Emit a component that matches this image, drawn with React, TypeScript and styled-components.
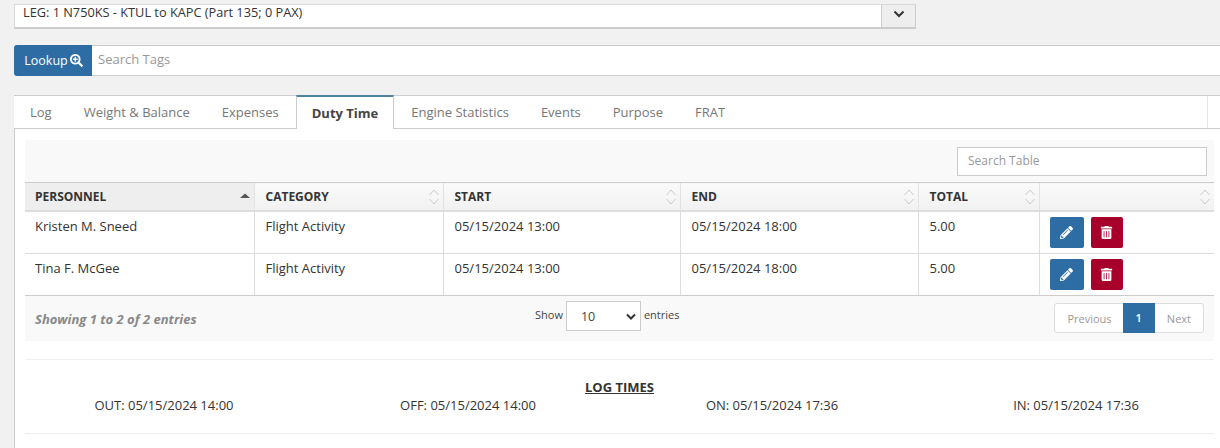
import React from "react";
import styled, { createGlobalStyle } from "styled-components";
import { FaPencilAlt, FaTrashAlt, FaSearchPlus } from "react-icons/fa";

const Global = createGlobalStyle`
  html, body { margin: 0; padding: 0; height: 448px; overflow: hidden; background: #f1f1f1; }
  * { box-sizing: border-box; }
  body { font-family: "Open Sans", sans-serif; font-size: 13px; color: #333; }
`;

const Page = styled.div`
  width: 1220px;
  height: 448px;
  padding: 4px 0 0 14px;
  overflow: hidden;
`;

const LegSelect = styled.div`
  width: 902px;
  height: 25px;
  display: flex;
  background: #fff;
  border: 1px solid #d8d8d8;
  border-bottom: 2px solid #ccc;
  border-right-color: #ccc;
`;

const LegText = styled.div`
  flex: 1;
  padding: 0 8px;
  font-size: 12.75px;
  line-height: 15px;
  color: #333;
`;

const Caret = styled.div`
  width: 34px;
  background: #eee;
  border-left: 1px solid #ccc;
  display: flex;
  justify-content: center;
  padding-top: 5px;
`;

const LookupRow = styled.div`
  display: flex;
  height: 31px;
  margin-top: 16px;
`;

const LookupButton = styled.button`
  width: 78px;
  border: none;
  border-radius: 3px 0 0 3px;
  background: #2e6da4;
  color: #fff;
  font: 12.5px "Open Sans", sans-serif;
  display: flex;
  align-items: center;
  justify-content: center;
  gap: 2px;
  padding: 0 0 0 1px;
`;

const TagInput = styled.div`
  flex: 1;
  background: #fff;
  border-top: 1px solid #ccc;
  border-bottom: 1px solid #ccc;
  padding-left: 6px;
  font-size: 13px;
  line-height: 27px;
  color: #999;
`;

const Panel = styled.div`
  margin-top: 19px;
  background: #fff;
  height: 360px;
  border-left: 1px solid #ccc;
`;

const Tabs = styled.div`
  display: flex;
  height: 34px;
  border-top: 1px solid #ccc;
  border-bottom: 1px solid #ccc;
`;

const Tab = styled.div<{ $active?: boolean }>`
  height: ${(p) => (p.$active ? "34px" : "32px")};
  padding: 0 ${(p) => (p.$active ? "15px" : "16px")};
  margin-top: ${(p) => (p.$active ? "-1px" : "0")};
  margin-left: ${(p) => (p.$active ? "1px" : "0")};
  margin-right: ${(p) => (p.$active ? "1px" : "0")};
  line-height: 33px;
  font-size: 13px;
  font-weight: ${(p) => (p.$active ? 700 : 400)};
  color: ${(p) => (p.$active ? "#444" : "#777")};
  background: #fff;
  &:first-child { margin-left: -1px; }
  ${(p) =>
    p.$active &&
    `border-top: 2px solid #4f849c; border-left: 1px solid #ccc; border-right: 1px solid #ccc; position: relative; z-index: 1;`}
`;

const TabFill = styled.div`
  margin-left: auto;
  width: 13px;
  border-left: 1px solid #e4e4e4;
`;

const Body = styled.div`
  padding: 11px 0 0 10px;
  width: 1199px;
`;

const TableTop = styled.div`
  height: 42px;
  background: #f9f9f9;
  display: flex;
  justify-content: flex-end;
  align-items: flex-start;
  padding: 7px 7px 0 0;
`;

const SearchTable = styled.div`
  width: 250px;
  height: 29px;
  background: #fff;
  border: 1px solid #ccc;
  padding-left: 10px;
  font-size: 12px;
  line-height: 26px;
  color: #999;
`;

const Table = styled.table`
  width: 1189px;
  border-collapse: collapse;
  table-layout: fixed;

  tbody tr:first-child td {
    height: 43px;
  }
`;

const Th = styled.th<{ $w: number; $sorted?: boolean }>`
  width: ${(p) => p.$w}px;
  height: 28px;
  padding: 0 11px;
  text-align: left;
  font-size: 12px;
  font-weight: 700;
  color: #333;
  background: ${(p) => (p.$sorted ? "#eee" : "linear-gradient(#fafafa, #f1f1f1)")};
  border-top: 1px solid #ccc;
  border-bottom: 2px solid #ddd;
  border-left: 1px solid #e2e2e2;
  position: relative;
  &:first-child { border-left: none; padding-left: 10px; }
`;

const SortMark = styled.svg`
  position: absolute;
  right: 3px;
  top: 5px;
`;

const Td = styled.td`
  height: 42px;
  padding: 6px 11px 0;
  vertical-align: top;
  font-size: 13px;
  line-height: 17px;
  color: #333;
  border-bottom: 1px solid #ddd;
  border-left: 1px solid #ddd;
  &:first-child { border-left: none; padding-left: 10px; }
`;

const LastRow = styled.tr`
  td { border-bottom: 1px solid #ccc; }
`;

const Actions = styled.div`
  display: flex;
  gap: 8px;
  margin-top: -1px;
`;

const IconButton = styled.button<{ $danger?: boolean }>`
  width: ${(p) => (p.$danger ? "32px" : "34px")};
  height: 31px;
  margin-left: -1px;
  border: none;
  border-radius: 2px;
  padding: 0;
  color: #fff;
  background: ${(p) => (p.$danger ? "#a6002b" : "#2e6da4")};
  display: flex;
  align-items: center;
  justify-content: center;
  font-size: 13px;
`;

const Footer = styled.div`
  height: 45px;
  background: #f9f9f9;
  display: grid;
  grid-template-columns: 500px auto 1fr;
  padding: 0 10px;
`;

const Info = styled.div`
  font-size: 13px;
  font-weight: 700;
  font-style: italic;
  color: #888;
  line-height: 47px;
`;

const Length = styled.div`
  display: flex;
  align-items: flex-start;
  padding-top: 5px;
  font-size: 11px;
  line-height: 27px;
  gap: 3px;
  color: #444;
`;

const LengthSelect = styled.div`
  width: 75px;
  height: 30px;
  background: #fff;
  border: 1px solid #ccc;
  padding: 0 4px 0 14px;
  font-size: 12.5px;
  line-height: 31px;
  display: flex;
  justify-content: space-between;
  align-items: center;
`;

const Pager = styled.div`
  justify-self: end;
  display: flex;
  height: 30px;
  margin-top: 7px;
  border: 1px solid #ddd;
  border-radius: 3px;
  background: #fff;
  font-size: 11px;
  line-height: 28px;
  color: #999;
`;

const PageButton = styled.div<{ $active?: boolean }>`
  padding: 0 ${(p) => (p.$active ? "13px" : "12px")};
  background: ${(p) => (p.$active ? "#2e6da4" : "transparent")};
  color: ${(p) => (p.$active ? "#fff" : "#999")};
  margin: ${(p) => (p.$active ? "-1px 0" : "0")};
  line-height: 30px;
  font-weight: ${(p) => (p.$active ? 600 : 400)};
  &:first-child { padding-left: 12px; padding-right: 11px; }
`;

const LogTimes = styled.section`
  margin-top: 18px;
  height: 75px;
  border-top: 1px solid #eee;
  border-bottom: 1px solid #eee;
  padding-top: 19px;
`;

const LogTitle = styled.div`
  text-align: center;
  font-size: 13px;
  font-weight: 700;
  text-decoration: underline;
  line-height: 17px;
`;

const LogGrid = styled.div`
  display: grid;
  grid-template-columns: repeat(4, 304px);
  margin: 1px 0 0 -13px;
  font-size: 13px;
  line-height: 17px;
  text-align: center;
  color: #333;
`;

const columns = [
  { label: "PERSONNEL", w: 229, sorted: true },
  { label: "CATEGORY", w: 189 },
  { label: "START", w: 237 },
  { label: "END", w: 238 },
  { label: "TOTAL", w: 121 },
  { label: "", w: 175 },
];

const rows = [
  { name: "Kristen M. Sneed" },
  { name: "Tina F. McGee" },
];

const times = ["OUT: 05/15/2024 14:00", "OFF: 05/15/2024 14:00", "ON: 05/15/2024 17:36", "IN: 05/15/2024 17:36"];

function Sort({ sorted }: { sorted?: boolean }) {
  if (sorted) {
    return (
      <SortMark width="12" height="16" viewBox="0 0 12 16">
        <path d="M1 10 L6 5.5 L11 10 Z" fill="#555" />
      </SortMark>
    );
  }
  return (
    <SortMark width="12" height="18" viewBox="0 0 12 18" fill="none" stroke="#ccc">
      <path d="M1.5 7 L6 2 L10.5 7" />
      <path d="M1.5 11 L6 16 L10.5 11" />
    </SortMark>
  );
}

export default function App() {
  return (
    <Page>
      <Global />
      <LegSelect>
        <LegText>LEG: 1 N750KS - KTUL to KAPC (Part 135; 0 PAX)</LegText>
        <Caret>
          <svg width="12" height="8" viewBox="0 0 12 8" fill="none" stroke="#333" strokeWidth="2">
            <path d="M1.5 1.5 L6 6 L10.5 1.5" />
          </svg>
        </Caret>
      </LegSelect>
      <LookupRow>
        <LookupButton>
          Lookup <FaSearchPlus size={13} />
        </LookupButton>
        <TagInput>Search Tags</TagInput>
      </LookupRow>
      <Panel>
        <Tabs>
          <Tab>Log</Tab>
          <Tab>Weight &amp; Balance</Tab>
          <Tab>Expenses</Tab>
          <Tab $active>Duty Time</Tab>
          <Tab>Engine Statistics</Tab>
          <Tab>Events</Tab>
          <Tab>Purpose</Tab>
          <Tab>FRAT</Tab>
          <TabFill />
        </Tabs>
        <Body>
          <TableTop>
            <SearchTable>Search Table</SearchTable>
          </TableTop>
          <Table>
            <thead>
              <tr>
                {columns.map((c) => (
                  <Th key={c.label} $w={c.w} $sorted={c.sorted}>
                    {c.label}
                    <Sort sorted={c.sorted} />
                  </Th>
                ))}
              </tr>
            </thead>
            <tbody>
              {rows.map((r, i) => {
                const Row = i === rows.length - 1 ? LastRow : "tr";
                return (
                  <Row key={r.name}>
                    <Td>{r.name}</Td>
                    <Td>Flight Activity</Td>
                    <Td>05/15/2024 13:00</Td>
                    <Td>05/15/2024 18:00</Td>
                    <Td>5.00</Td>
                    <Td>
                      <Actions>
                        <IconButton>
                          <FaPencilAlt />
                        </IconButton>
                        <IconButton $danger>
                          <FaTrashAlt />
                        </IconButton>
                      </Actions>
                    </Td>
                  </Row>
                );
              })}
            </tbody>
          </Table>
          <Footer>
            <Info>Showing 1 to 2 of 2 entries</Info>
            <Length>
              Show
              <LengthSelect>
                10
                <svg width="10" height="7" viewBox="0 0 10 7" fill="none" stroke="#333" strokeWidth="2">
                  <path d="M1 1.5 L5 5.5 L9 1.5" />
                </svg>
              </LengthSelect>
              entries
            </Length>
            <Pager>
              <PageButton>Previous</PageButton>
              <PageButton $active>1</PageButton>
              <PageButton>Next</PageButton>
            </Pager>
          </Footer>
          <LogTimes>
            <LogTitle>LOG TIMES</LogTitle>
            <LogGrid>
              {times.map((t) => (
                <div key={t}>{t}</div>
              ))}
            </LogGrid>
          </LogTimes>
        </Body>
      </Panel>
    </Page>
  );
}
